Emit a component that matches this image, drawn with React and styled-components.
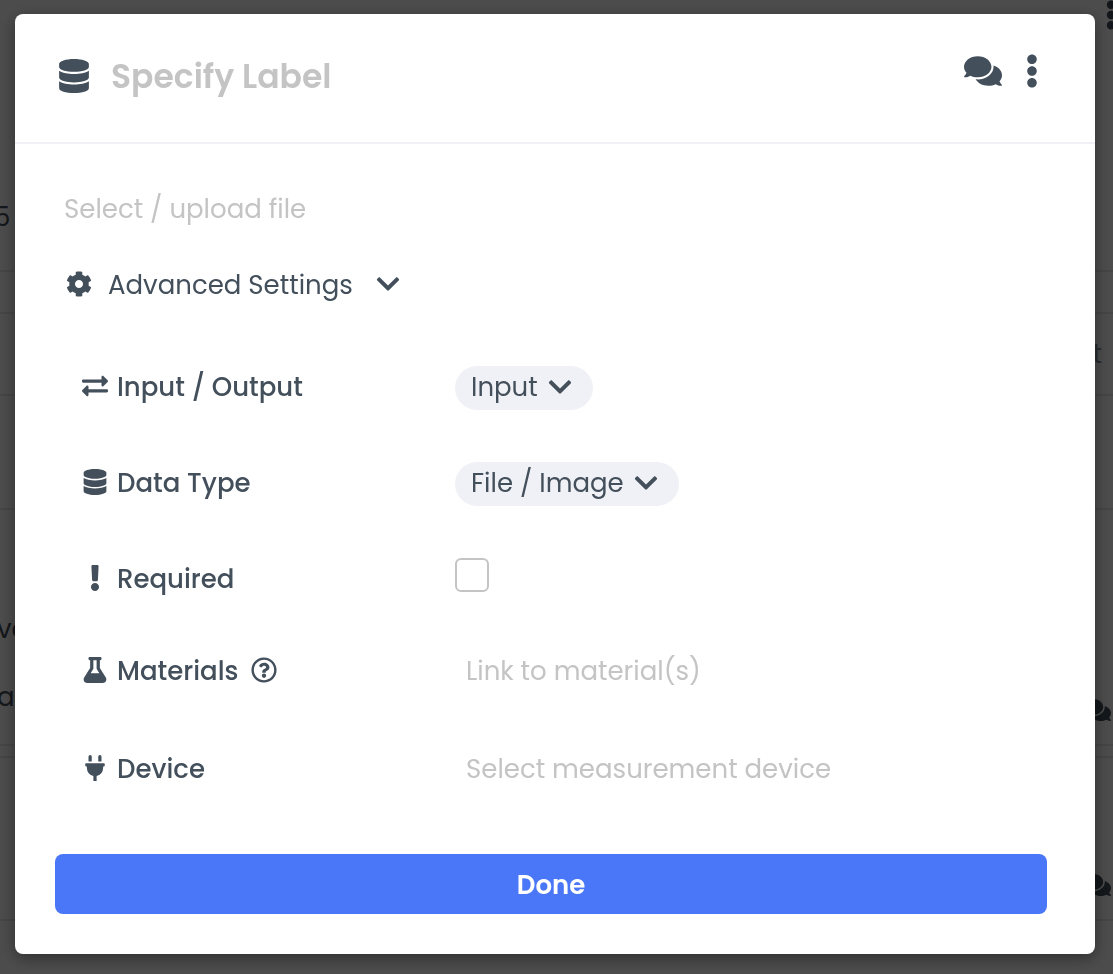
import { useState } from 'react';
import styled, { createGlobalStyle } from 'styled-components';
import {
    FaChevronDown,
    FaCog,
    FaComments,
    FaDatabase,
    FaEllipsisV,
    FaExchangeAlt,
    FaExclamation,
    FaFlask,
    FaPlug,
    FaRegQuestionCircle,
} from 'react-icons/fa';

const GlobalStyle = createGlobalStyle`
    :root {
        --text: #434f5b;
        --placeholder: #c4c4c4;
        --line: #f0f1f6;
        --primary: #4a77f7;
        --font-medium: 26px;
        --font-large: 33px;
    }
    * {
        box-sizing: border-box;
    }
    body {
        margin: 0;
        color: var(--text);
        font-family: Poppins, Inter, 'Open Sans', sans-serif;
        font-size: var(--font-medium);
        line-height: 36px;
    }
    button,
    input,
    select {
        padding: 0;
        border: none;
        background: none;
        color: inherit;
        font: inherit;
    }
    button {
        cursor: pointer;
    }
    input::placeholder {
        color: var(--placeholder);
        opacity: 1;
    }
    svg {
        display: block;
        flex-shrink: 0;
    }
`;

// Page behind the dialog
const Page = styled.div`
    height: 100vh;
    overflow: hidden;
    background-color: #ffffff;
`;

const PageSection = styled.section`
    display: flex;
    flex-direction: column;
    justify-content: ${(props) => props.$justify || 'center'};
    height: ${(props) => props.$height}px;
    padding: ${(props) => props.$padding || '0'};
    border-bottom: 2px solid #e8e8e8;
`;

const PageLine = styled.div`
    display: flex;
    justify-content: ${(props) => (props.$end ? 'flex-end' : 'space-between')};
    align-items: flex-end;
`;

// Content that runs past the edge of the window
const Bleed = styled.div`
    margin: 0 -13px 0 -6px;
`;

const PageText = styled.p`
    margin: 0 0 0 -3px;
    padding-bottom: 20px;
    line-height: 34px;
`;

const PageCell = styled.div`
    display: flex;
    justify-content: flex-end;
    align-items: center;
    height: 84px;
    padding-right: 11px;
    border-top: 2px solid #e8e8e8;
    border-bottom: 2px solid #e8e8e8;
    color: #8b929a;
`;

const PageIcon = styled.div`
    padding: 0 2px 10px 0;
`;

// Dialog
const Overlay = styled.div`
    position: fixed;
    inset: 0;
    overflow: auto;
    padding: 14px 18px 20px 15px;
    background-color: rgba(0, 0, 0, 0.7);
`;

const Modal = styled.div`
    border-radius: 8px;
    background-color: #ffffff;
    box-shadow: 0 4px 16px rgba(0, 0, 0, 0.4);
`;

const ModalHeader = styled.header`
    display: flex;
    align-items: center;
    gap: 20px;
    height: 130px;
    padding: 0 46px 5px 42px;
    border-bottom: 2px solid var(--line);
`;

const TitleInput = styled.input`
    flex: 1;
    min-width: 0;
    padding-top: 2px;
    font-size: var(--font-large);
    font-weight: 600;
    line-height: 48px;
`;

const HeaderActions = styled.div`
    display: flex;
    align-items: center;
    gap: 13px;
    padding-bottom: 10px;
`;

const ModalBody = styled.div`
    padding: 47px 48px 40px 40px;
`;

const FileInput = styled.input`
    display: block;
    width: 100%;
    height: 36px;
    padding-left: 9px;
`;

const SettingsToggle = styled.button`
    display: flex;
    align-items: center;
    gap: 16px;
    margin: 40px 0 62px 11px;

    svg {
        margin-bottom: 2px;
    }
`;

const ToggleText = styled.span`
    margin-right: 6px;
`;

const Settings = styled.div`
    display: flex;
    flex-direction: column;
    gap: 52px;
    padding-left: 27px;
`;

const Row = styled.div`
    display: grid;
    grid-template-columns: 373px 1fr;
    align-items: start;
    min-height: ${(props) => props.$height || 36}px;
`;

const Label = styled.label`
    display: flex;
    align-items: center;
    gap: 9px;
    height: ${(props) => props.$height || 36}px;
    font-weight: 500;

    svg {
        margin-bottom: 2px;
    }
`;

const HelpButton = styled.button`
    margin-left: 3px;
`;

const Pill = styled.div`
    display: grid;
    grid-template-columns: 1fr 26px;
    align-items: center;
    width: ${(props) => props.$width}px;
    height: 44px;
    margin-bottom: -1px;
    padding: 0 20px 2px 0;
    border-radius: 22px;
    background-color: var(--line);

    svg {
        grid-area: 1 / 2;
        pointer-events: none;
    }
`;

const Select = styled.select`
    grid-area: 1 / 1 / 2 / 3;
    width: 100%;
    height: 42px;
    padding-left: 16px;
    appearance: none;
    cursor: pointer;
`;

const Control = styled.div`
    height: 44px;
    padding-top: 1px;
`;

const Checkbox = styled.input`
    display: block;
    width: 34px;
    height: 34px;
    margin: 0;
    border: 2px solid var(--placeholder);
    border-radius: 6px;
    appearance: none;

    &:checked {
        border-color: var(--primary);
        background-color: var(--primary);
    }
`;

const LinkInput = styled.input`
    width: 100%;
    height: 36px;
    padding-left: 11px;
`;

const DoneButton = styled.button`
    display: block;
    width: 100%;
    height: 60px;
    margin-top: 67px;
    padding-top: 2px;
    border-radius: 8px;
    background-color: var(--primary);
    color: #ffffff;
    font-weight: 600;
`;

function PillSelect({ id, width, options }) {
    const [value, setValue] = useState(options[0]);
    return (
        <Pill $width={width}>
            <Select
                id={id}
                value={value}
                onChange={(e) => setValue(e.target.value)}
            >
                {options.map((option) => (
                    <option key={option}>{option}</option>
                ))}
            </Select>
            <FaChevronDown size={26} />
        </Pill>
    );
}

function BackgroundPage() {
    return (
        <Page aria-hidden="true">
            <PageSection $height={272} $justify="space-between" $padding="0 0 35px">
                <Bleed>
                    <PageLine $end>
                        <FaEllipsisV size={30} />
                    </PageLine>
                </Bleed>
                <Bleed>5</Bleed>
            </PageSection>
            <PageSection $height={238} $justify="flex-start" $padding="40px 0 0">
                <PageCell>t</PageCell>
            </PageSection>
            <PageSection $height={236} $justify="flex-end" $padding="0 0 10px">
                <PageLine>
                    <PageText>
                        ve
                        <br />
                        <br />
                        a
                    </PageText>
                    <PageIcon>
                        <FaComments size={28} />
                    </PageIcon>
                </PageLine>
            </PageSection>
            <PageSection $height={12} />
            <PageSection $height={163} $justify="flex-end" $padding="0 0 10px">
                <PageLine $end>
                    <PageIcon>
                        <FaComments size={28} />
                    </PageIcon>
                </PageLine>
            </PageSection>
        </Page>
    );
}

export default function App() {
    const [open, setOpen] = useState(true);

    return (
        <>
            <GlobalStyle />
            <BackgroundPage />
            <Overlay>
                <Modal role="dialog" aria-label="Specify Label">
                    <ModalHeader>
                        <FaDatabase size={34} />
                        <TitleInput aria-label="Label" placeholder="Specify Label" />
                        <HeaderActions>
                            <button aria-label="Comments">
                                <FaComments size={38} />
                            </button>
                            <button aria-label="More">
                                <FaEllipsisV size={34} />
                            </button>
                        </HeaderActions>
                    </ModalHeader>
                    <ModalBody>
                        <FileInput aria-label="File" placeholder="Select / upload file" />
                        <SettingsToggle
                            aria-expanded={open}
                            onClick={() => setOpen(!open)}
                        >
                            <FaCog size={26} />
                            <ToggleText>Advanced Settings</ToggleText>
                            <FaChevronDown size={26} />
                        </SettingsToggle>
                        {open && (
                            <Settings>
                                <Row $height={44}>
                                    <Label htmlFor="direction" $height={44}>
                                        <FaExchangeAlt size={26} />
                                        Input / Output
                                    </Label>
                                    <Control>
                                        <PillSelect
                                            id="direction"
                                            width={138}
                                            options={['Input', 'Output']}
                                        />
                                    </Control>
                                </Row>
                                <Row $height={44}>
                                    <Label htmlFor="dataType" $height={44}>
                                        <FaDatabase size={26} />
                                        Data Type
                                    </Label>
                                    <Control>
                                        <PillSelect
                                            id="dataType"
                                            width={224}
                                            options={['File / Image', 'Text', 'Number']}
                                        />
                                    </Control>
                                </Row>
                                <Row $height={44}>
                                    <Label htmlFor="required" $height={44}>
                                        <FaExclamation size={26} />
                                        Required
                                    </Label>
                                    <Control>
                                        <Checkbox id="required" type="checkbox" />
                                    </Control>
                                </Row>
                                <Row $height={46}>
                                    <Label htmlFor="materials">
                                        <FaFlask size={26} />
                                        Materials
                                        <HelpButton aria-label="About materials">
                                            <FaRegQuestionCircle size={26} />
                                        </HelpButton>
                                    </Label>
                                    <LinkInput
                                        id="materials"
                                        placeholder="Link to material(s)"
                                    />
                                </Row>
                                <Row>
                                    <Label htmlFor="device">
                                        <FaPlug size={26} />
                                        Device
                                    </Label>
                                    <LinkInput
                                        id="device"
                                        placeholder="Select measurement device"
                                    />
                                </Row>
                            </Settings>
                        )}
                        <DoneButton>Done</DoneButton>
                    </ModalBody>
                </Modal>
            </Overlay>
        </>
    );
}
